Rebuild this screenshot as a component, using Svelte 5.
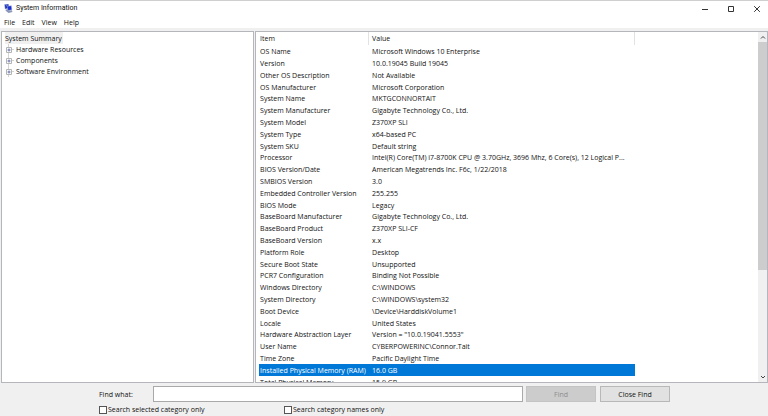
<script>
  const menus = ['File', 'Edit', 'View', 'Help'];
  const categories = ['Hardware Resources', 'Components', 'Software Environment'];
  const rows = [
    ['OS Name', 'Microsoft Windows 10 Enterprise'],
    ['Version', '10.0.19045 Build 19045'],
    ['Other OS Description', 'Not Available'],
    ['OS Manufacturer', 'Microsoft Corporation'],
    ['System Name', 'MKTGCONNORTAIT'],
    ['System Manufacturer', 'Gigabyte Technology Co., Ltd.'],
    ['System Model', 'Z370XP SLI'],
    ['System Type', 'x64-based PC'],
    ['System SKU', 'Default string'],
    ['Processor', 'Intel(R) Core(TM) i7-8700K CPU @ 3.70GHz, 3696 Mhz, 6 Core(s), 12 Logical P...'],
    ['BIOS Version/Date', 'American Megatrends Inc. F6c, 1/22/2018'],
    ['SMBIOS Version', '3.0'],
    ['Embedded Controller Version', '255.255'],
    ['BIOS Mode', 'Legacy'],
    ['BaseBoard Manufacturer', 'Gigabyte Technology Co., Ltd.'],
    ['BaseBoard Product', 'Z370XP SLI-CF'],
    ['BaseBoard Version', 'x.x'],
    ['Platform Role', 'Desktop'],
    ['Secure Boot State', 'Unsupported'],
    ['PCR7 Configuration', 'Binding Not Possible'],
    ['Windows Directory', 'C:\\WINDOWS'],
    ['System Directory', 'C:\\WINDOWS\\system32'],
    ['Boot Device', '\\Device\\HarddiskVolume1'],
    ['Locale', 'United States'],
    ['Hardware Abstraction Layer', 'Version = "10.0.19041.5553"'],
    ['User Name', 'CYBERPOWERINC\\Connor.Tait'],
    ['Time Zone', 'Pacific Daylight Time'],
    ['Installed Physical Memory (RAM)', '16.0 GB'],
    ['Total Physical Memory', '15.9 GB']
  ];
  let selected = $state(27);
  let query = $state('');
</script>

<div class="window">
  <header class="title">
    <svg class="logo" viewBox="0 0 16 16" aria-hidden="true">
      <path d="M1 1l7-1 1 7-7 2z" fill="#1d35b8" stroke="#a9b3d8" stroke-width=".8" />
      <path d="M6 4l7-1 1 7-7 2z" fill="#1a2fd0" stroke="#a9b3d8" stroke-width=".8" />
      <path d="M3 10l4-1 1 3 6-1 1 3-7 2-5-4z" fill="#8b96b8" />
      <path d="M3 2l3 0 0 3z" fill="#7e9cf0" />
    </svg>
    <h1>System Information</h1>
    <div class="controls">
      <button aria-label="Minimize"><svg viewBox="0 0 8 8"><path d="M1 4.5h6" /></svg></button>
      <button aria-label="Maximize"><svg viewBox="0 0 8 8"><path d="M1.5 1.5h5v5h-5z" /></svg></button>
      <button aria-label="Close"><svg viewBox="0 0 8 8"><path d="M1.2 1.2l5.6 5.6M6.8 1.2L1.2 6.8" /></svg></button>
    </div>
  </header>
  <nav class="menu" aria-label="Menu bar">
    {#each menus as menu}<button>{menu}</button>{/each}
  </nav>

  <main>
    <section class="pane tree" aria-label="Categories">
      <button class="root">System Summary</button>
      <ul>
        {#each categories as category}
          <li>
            <button class="node">
              <svg viewBox="0 0 9 11" aria-hidden="true">
                <path d="M3.5 0v11M6 5.5h3" stroke="#d4d4d4" />
                <path d="M1.500 3.500h5v5h-5z" fill="#fff" stroke="#b4b4b4" />
                <path d="M2.500 6h3M4 4.500v3" stroke="#6474a8" />
              </svg>
              {category}
            </button>
          </li>
        {/each}
      </ul>
    </section>

    <section class="pane details" aria-label="Details">
      <div class="list">
        <table>
          <thead><tr><th class="item">Item</th><th>Value</th></tr></thead>
          <tbody>
            {#each rows as [item, value], i}
              <tr class:selected={selected === i} onclick={() => (selected = i)}>
                <td>{item}</td><td>{value}</td>
              </tr>
            {/each}
          </tbody>
        </table>
      </div>
      <div class="scrollbar">
        <button aria-label="Scroll up"><svg viewBox="0 0 8 8"><path d="M2 5.500l2-2 2 2" /></svg></button>
        <div class="track"><div class="thumb"></div></div>
        <button aria-label="Scroll down"><svg viewBox="0 0 8 8"><path d="M2 3l2 2 2-2" /></svg></button>
      </div>
    </section>
  </main>

  <form class="find" onsubmit={(e) => e.preventDefault()}>
    <div class="line">
      <label class="what" for="query">Find what:</label>
      <input id="query" type="text" bind:value={query} />
      <button class="push" disabled={!query}>Find</button>
      <button class="push" type="button">Close Find</button>
    </div>
    <div class="line options">
      <label><input type="checkbox" />Search selected category only</label>
      <label><input type="checkbox" />Search category names only</label>
    </div>
  </form>
</div>

<style>
  :global(body) { margin: 0; }
  .window {
    box-sizing: border-box;
    display: flex;
    flex-direction: column;
    height: 100vh;
    border-top: 1px solid #cfcfcf;
    background: #f0f0f0;
    color: #111;
    font: 7px/11px "Open Sans", "Noto Sans", sans-serif;
    overflow: hidden;
  }
  button {
    padding: 0;
    border: 0;
    background: none;
    color: inherit;
    font: inherit;
  }
  svg { display: block; fill: none; }
  .title {
    display: flex;
    align-items: center;
    height: 15px;
    padding-left: 4px;
    background: #fff;
  }
  .logo { width: 9px; height: 9px; }
  h1 { margin: 0 0 0 3px; font: 7px/11px Roboto, sans-serif; }
  .controls { display: flex; gap: 3px; margin-left: auto; }
  .controls button {
    display: grid;
    place-items: center;
    width: 23px;
    height: 15px;
  }
  .controls svg { width: 8px; height: 8px; stroke: #333; }
  .menu {
    display: flex;
    align-items: flex-end;
    gap: 7px;
    height: 12px;
    padding-left: 4px;
    background: #fff;
  }
  main {
    display: flex;
    flex: 1;
    gap: 1px;
    min-height: 0;
    padding: 3px 0 0 1px;
  }
  .pane {
    box-sizing: border-box;
    border: 1px solid #b4b6bc;
    background: #fff;
  }
  .tree { width: 33%; padding: 0 3px; }
  .root { display: block; height: 12px; padding-right: 1px; background: #f0f0f0; }
  ul { margin: 0; padding: 0; list-style: none; }
  .node { display: flex; align-items: center; gap: 2px; }
  .node svg { width: 9px; height: 11px; }
  .details { display: flex; flex: 1; min-width: 0; }
  .list { flex: 1; min-width: 0; padding-left: 3px; overflow: hidden; }
  table {
    width: 376px;
    table-layout: fixed;
    border-collapse: separate;
    border-spacing: 0;
  }
  th, td {
    padding: 0 0 0 1px;
    font-weight: 400;
    text-align: left;
    white-space: nowrap;
  }
  th { height: 13px; border-right: 1px solid #e2e2e2; }
  td + td, th + th { padding-left: 3px; }
  .item { width: 108px; }
  tbody tr { height: 12px; }
  tbody tr:nth-child(5n) { height: 11px; }
  .selected { background: #0078d7; color: #fff; }
  .scrollbar {
    display: flex;
    flex-direction: column;
    width: 9px;
    background: #f0f0f0;
  }
  .scrollbar button { height: 10px; }
  .scrollbar svg { width: 8px; height: 8px; margin: auto; stroke: #444; }
  .track { flex: 1; }
  .thumb { height: 69%; background: #cdcdcd; }
  .find { padding: 3px 98px 1px 99px; }
  .line { display: flex; align-items: center; gap: 3px; }
  .what { width: 51px; }
  #query {
    box-sizing: border-box;
    flex: 1;
    min-width: 0;
    height: 16px;
    padding: 0 2px;
    border: 1px solid #a9a9a9;
    background: #fff;
    font: inherit;
  }
  .push {
    box-sizing: border-box;
    width: 70px;
    height: 16px;
    border: 1px solid #b8b8b8;
    background: #e1e1e1;
  }
  .push:disabled { border-color: #c4c4c4; background: #ccc; color: #8c8c8c; }
  .push + .push { margin-left: 1px; }
  .options { padding-top: 2px; gap: 0; }
  .options label { display: flex; align-items: center; gap: 1px; width: 185px; }
  .options input {
    appearance: none;
    box-sizing: border-box;
    width: 8px;
    height: 8px;
    margin: 0;
    border: 1px solid #555;
    background: #fff;
  }
  .options input:checked { background: #0078d7; }
</style>
